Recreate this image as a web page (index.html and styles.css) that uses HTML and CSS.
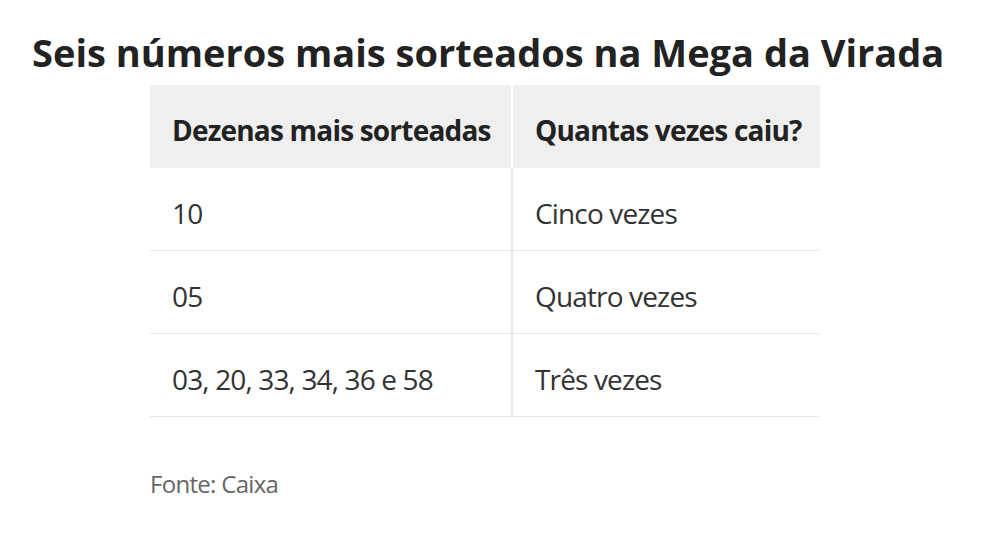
FILE: index.html
```html
<!DOCTYPE html>
<html lang="pt-BR">
<head>
    <meta charset="UTF-8">
    <meta name="viewport" content="width=device-width, initial-scale=1.0">
    <title>Mega da Virada</title>
    <link rel="stylesheet" href="styles.css">
</head>
<body>

    <!-- Titulo -->
    <h1 class="titulo">Seis números mais sorteados na Mega da Virada</h1>

    <!-- Tabela -->
    <table class="tabela">
        <thead>
            <tr>
                <th>Dezenas mais sorteadas</th>
                <th>Quantas vezes caiu?</th>
            </tr>
        </thead>
        <tbody>
            <tr>
                <td>10</td>
                <td>Cinco vezes</td>
            </tr>
            <tr>
                <td>05</td>
                <td>Quatro vezes</td>
            </tr>
            <tr>
                <td>03, 20, 33, 34, 36 e 58</td>
                <td>Três vezes</td>
            </tr>
        </tbody>
    </table>

    <p class="fonte">Fonte: Caixa</p>

</body>
</html>
```

FILE: styles.css
```css
body {
    margin: 0;
    font-family: "Open Sans", Arial, sans-serif;
    color: #333;
    background-color: #fff;
}

.titulo {
    margin: 28px 0 0 32px;
    font-size: 38px;
    font-weight: 700;
    line-height: 48px;
    color: #222;
    white-space: nowrap;
}

.tabela {
    margin: 9px 0 0 150px;
    width: 670px;
    border-collapse: collapse;
}
.tabela th, .tabela td {
    height: 74px;
    padding: 8px 0 0 22px;
    text-align: left;
    font-size: 28px;
    letter-spacing: -0.85px;
    border-bottom: 1px solid #e8e8e8;
    white-space: nowrap;
}
.tabela th {
    height: 77px;
    background-color: #efefef;
    padding-top: 6px;
    font-weight: 700;
    letter-spacing: -0.8px;
    color: #222;
    border-bottom: none;
}
.tabela th:first-child, .tabela td:first-child {
    width: 339px;
    border-right: 2px solid #e8e8e8;
}
.tabela th:first-child {
    border-right: 2px solid #fff;
}
.tabela td {
    color: #333;
}

.fonte {
    margin: 49px 0 0 150px;
    font-size: 24px;
    letter-spacing: -0.7px;
    line-height: 36px;
    color: #666;
}
```
